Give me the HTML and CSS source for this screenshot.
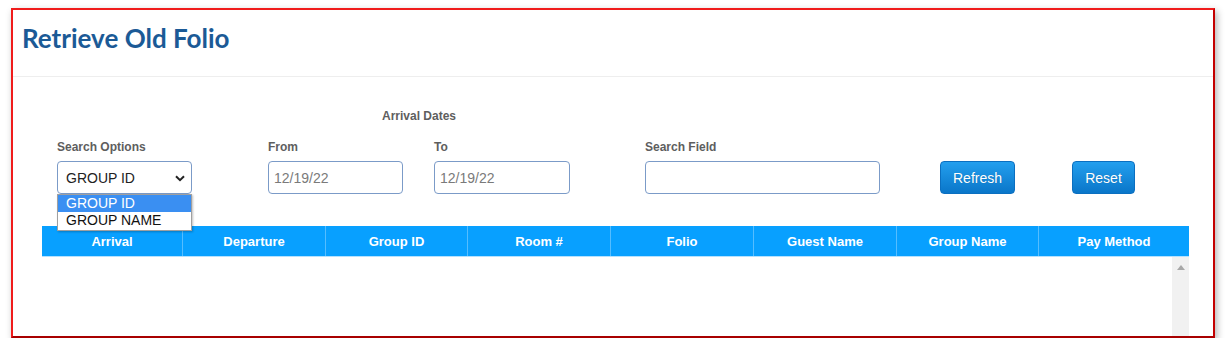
FILE: index.html
```html
<!DOCTYPE html>
<html>
<head>
<meta charset="utf-8">
<link rel="stylesheet" href="styles.css">
</head>
<body>
<div class="frame">
  <div class="page-head">
    <h1 class="title">Retrieve Old Folio</h1>
  </div>
  <div class="form">
    <div class="field field-select">
      <label class="lbl">Search Options</label>
      <div class="select">
        <span>GROUP ID</span>
        <svg class="chev" width="10" height="7" viewBox="0 0 10 7"><path d="M1 1.2 L5 5.2 L9 1.2" fill="none" stroke="#222" stroke-width="2"/></svg>
      </div>
      <ul class="dropdown">
        <li class="opt active">GROUP ID</li>
        <li class="opt">GROUP NAME</li>
      </ul>
    </div>
    <div class="dates">
      <div class="dates-title">Arrival Dates</div>
      <div class="dates-row">
        <div class="field">
          <label class="lbl">From</label>
          <input class="inp date" type="text" value="12/19/22">
        </div>
        <div class="field field-to">
          <label class="lbl">To</label>
          <input class="inp date" type="text" value="12/19/22">
        </div>
      </div>
    </div>
    <div class="field field-search">
      <label class="lbl">Search Field</label>
      <input class="inp search" type="text" value="">
    </div>
    <button class="btn btn-refresh">Refresh</button>
    <button class="btn btn-reset">Reset</button>
  </div>
  <div class="grid">
    <div class="grid-head">
      <div class="th">Arrival</div>
      <div class="th">Departure</div>
      <div class="th">Group ID</div>
      <div class="th">Room #</div>
      <div class="th">Folio</div>
      <div class="th">Guest Name</div>
      <div class="th">Group Name</div>
      <div class="th">Pay Method</div>
    </div>
    <div class="grid-body">
      <div class="scroll">
        <svg class="arrow" width="8" height="5" viewBox="0 0 8 5"><path d="M0 5 L4 0 L8 5 Z" fill="#a8a8a8"/></svg>
      </div>
    </div>
  </div>
</div>
</body>
</html>
```

FILE: styles.css
```css
* { box-sizing: border-box; }
html, body { margin: 0; padding: 0; background: #fff; }
body { font-family: "Liberation Sans", Arial, sans-serif; }

.frame {
  position: relative;
  margin: 8px 0 0 11px;
  width: 1204px;
  height: 330px;
  border: 2px solid #f01c1c;
  border-right-color: #c40000;
  border-bottom-color: #a80000;
  box-shadow: 2px 3px 7px rgba(0,0,0,0.3);
  background: #fff;
  overflow: hidden;
}

.page-head {
  height: 67px;
  border-bottom: 1px solid #eeeeee;
  padding: 13px 0 0 9px;
}
.title {
  margin: 0;
  font-family: Lato, "Open Sans", sans-serif;
  font-weight: 700;
  font-size: 26px;
  line-height: 30px;
  color: #1b5a96;
}

.form {
  display: flex;
  align-items: flex-end;
  padding: 32px 0 0 44px;
  height: 149px;
}
.form > * { margin-bottom: 32px; }

.field { display: flex; flex-direction: column; position: relative; }
.lbl {
  font-size: 12px;
  font-weight: 700;
  color: #5e5e5e;
  line-height: 14px;
  margin-bottom: 7px;
}

.select {
  width: 135px;
  height: 33px;
  border: 1px solid #7b9bc8;
  border-radius: 4px;
  display: flex;
  align-items: center;
  justify-content: space-between;
  padding: 0 6px 0 8px;
  font-size: 14px;
  color: #222;
}
.chev { margin-top: 1px; }

.dropdown {
  position: absolute;
  top: 54px;
  left: 0;
  width: 135px;
  margin: 0;
  padding: 0 0 1px 0;
  list-style: none;
  background: #fff;
  border: 1px solid #a0a0a0;
  box-shadow: 1px 1px 2px rgba(0,0,0,0.25);
  z-index: 5;
}
.opt {
  font-size: 14px;
  line-height: 17px;
  height: 17px;
  padding-left: 8px;
  color: #111;
}
.opt.active { background: #3a8ff2; color: #fff; }

.field-select { margin-right: 76px; }

.dates { display: flex; flex-direction: column; align-items: center; margin-right: 75px; }
.dates-title {
  font-size: 12px;
  font-weight: 700;
  color: #5e5e5e;
  line-height: 14px;
  margin-bottom: 17px;
}
.dates-row { display: flex; }
.field-to { margin-left: 31px; }

.inp {
  height: 33px;
  border: 1px solid #7b9bc8;
  border-radius: 4px;
  font-family: "Liberation Sans", Arial, sans-serif;
  font-size: 14px;
  color: #7a7a7a;
  padding: 0 0 0 5px;
  outline: none;
  background: #fff;
}
.date { width: 135px; }
.field-to .date { width: 136px; }
.search { width: 235px; }
.field-search { margin-right: 60px; }

.btn {
  height: 33px;
  border: 1px solid #0b6fc0;
  border-radius: 4px;
  background: linear-gradient(#239fee, #0a76c9);
  color: #fff;
  font-family: "Liberation Sans", Arial, sans-serif;
  font-size: 14px;
  padding: 0;
  text-shadow: 0 0 1px rgba(0,0,0,0.2);
}
.btn-refresh { width: 75px; margin-right: 57px; }
.btn-reset { width: 63px; }

.grid {
  margin: 0 24px 0 29px;
}
.grid-head {
  display: grid;
  grid-template-columns: 141px 143px 142px 143px 143px 143px 142px 1fr;
  height: 31px;
  background: #08a0ff;
  border-bottom: 1px solid #b4e1ff;
}
.th {
  color: #fff;
  font-size: 13px;
  font-weight: 700;
  display: flex;
  align-items: center;
  justify-content: center;
  border-right: 1px solid #55bdff;
}
.th:last-child { border-right: none; }

.grid-body {
  height: 90px;
  display: flex;
  justify-content: flex-end;
}
.scroll {
  width: 17px;
  background: #f1f1f1;
  display: flex;
  justify-content: center;
  padding-top: 8px;
}
.arrow { display: block; }
```
